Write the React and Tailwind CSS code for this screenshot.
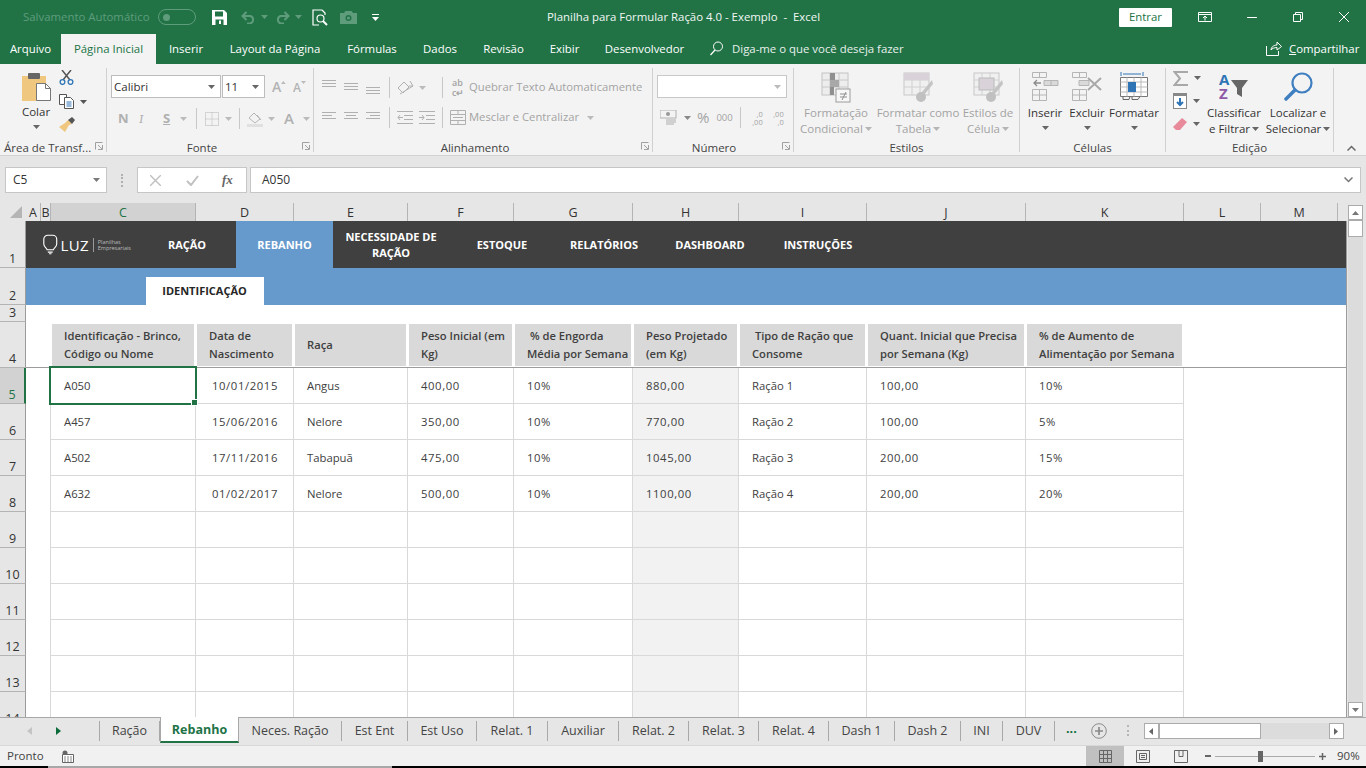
import React from "react";

const Caret = ({ c = "#7a7a7a", className = "" }) => (
  <svg width="7" height="4" viewBox="0 0 7 4" className={className}><path d="M0 0h7L3.5 4z" fill={c} /></svg>
);

const Launcher = ({ className = "" }) => (
  <svg width="8" height="8" viewBox="0 0 8 8" className={className} fill="none" stroke="#a0a0a0"><path d="M.5 7.5v-7h7M7.5 3v4.5H3M3 3l4 4" /></svg>
);

const Group = ({ className, label, noLauncher, children, labelClass = "" }) => (
  <div className={`relative flex flex-col h-[84px] shrink-0 border-r border-[#d0d0d0] ${className}`}>
    <div className="h-[73px] shrink-0">{children}</div>
    <div className={`flex-1 text-center text-[11.5px] leading-[13px] text-[#444] whitespace-nowrap ${labelClass}`}>{label}</div>
    {!noLauncher && <Launcher className="absolute right-[3px] bottom-[2px]" />}
  </div>
);

const Lines = ({ rows, y = 0 }) => (
  <svg width="15" height="14" viewBox="0 0 15 14" stroke="#b0b0b0" strokeWidth="1">
    {rows.map((r, i) => <path key={i} d={`M${r[0]} ${y + i * 3 + 1.5}H${r[1]}`} />)}
  </svg>
);

const full3 = [[0, 14], [0, 14], [0, 14]];

const SmallSep = () => <div className="w-px h-[21px] bg-[#c8c8c8] shrink-0" />;

const BigGray = ({ className, l1, l2, children }) => (
  <div className={`flex flex-col items-center shrink-0 text-[11.5px] leading-[16px] text-[#a3a3a3] whitespace-nowrap ${className}`}>
    <div className="h-[33px] mt-[4px]">{children}</div>
    <div>{l1}</div>
    <div className="flex items-center gap-[2px]">{l2}<Caret c="#b5b5b5" /></div>
  </div>
);

const BigDark = ({ className, label, children }) => (
  <div className={`flex flex-col items-center shrink-0 text-[11.5px] leading-[16px] text-[#333] whitespace-nowrap ${className}`}>
    <div className="h-[33px] mt-[4px]">{children}</div>
    <div>{label}</div>
    <Caret c="#666" className="mt-[5px]" />
  </div>
);

const TableIcon = ({ accent }) => (
  <svg width="30" height="31" viewBox="0 0 30 31" fill="none">
    <rect x="1" y="1" width="25" height="22" fill="#f0f0f0" stroke="#c8c8c8" />
    <path d="M1 8h25M1 15h25M9 1v22M17 1v22" stroke="#d0d0d0" />
    {accent}
  </svg>
);

const tabs = [
  ["Arquivo", "w-[61px]"],
  ["Página Inicial", "w-[95px]", true],
  ["Inserir", "w-[60px]"],
  ["Layout da Página", "w-[118px]"],
  ["Fórmulas", "w-[76px]"],
  ["Dados", "w-[60px]"],
  ["Revisão", "w-[67px]"],
  ["Exibir", "w-[55px]"],
  ["Desenvolvedor", "w-[105px]"],
];

function TitleBar() {
  return (
    <div className="h-[34px] bg-[#217346] flex items-center text-[11.4px] shrink-0 text-white">
      <span className="ml-[23px] w-[129px] shrink-0 text-[#5f9c7c] whitespace-nowrap">Salvamento Automático</span>
      <div className="ml-[6px] w-[38px] h-[16px] rounded-full border border-[#5f9c7c] flex items-center pl-[4px] shrink-0">
        <div className="w-[7px] h-[7px] rounded-full bg-[#5f9c7c]" />
      </div>
      <svg className="ml-[16px]" width="15" height="15" viewBox="0 0 15 15">
        <path d="M0 0h12l3 3v12H0z" fill="#fff" />
        <rect x="3" y="1.5" width="8" height="5" fill="#217346" />
        <rect x="3.5" y="9.5" width="8" height="5.5" fill="#217346" />
        <rect x="7" y="10.5" width="2" height="3.5" fill="#fff" />
      </svg>
      <svg className="ml-[14px]" width="15" height="13" viewBox="0 0 15 13" fill="none" stroke="#5f9c7c" strokeWidth="2">
        <path d="M5.5 1 1.5 5l4 4M2 5h7.5a4 4 0 0 1 0 7.5H6" />
      </svg>
      <Caret c="#5f9c7c" className="ml-[5px]" />
      <svg className="ml-[7px]" width="15" height="13" viewBox="0 0 15 13" fill="none" stroke="#5f9c7c" strokeWidth="2">
        <path d="M9.5 1l4 4-4 4M13 5H5.5a4 4 0 0 0 0 7.5H9" />
      </svg>
      <Caret c="#5f9c7c" className="ml-[5px]" />
      <svg className="ml-[10px]" width="16" height="17" viewBox="0 0 16 17" fill="none" stroke="#fff" strokeWidth="1.2">
        <path d="M10 1H1v15h6M10 1l3 3v2" />
        <circle cx="8.5" cy="9.5" r="3.5" />
        <path d="M11 12l4 4" strokeWidth="2" />
      </svg>
      <svg className="ml-[12px]" width="17" height="13" viewBox="0 0 17 13">
        <path d="M0 2h4l1.5-2h6L13 2h4v11H0z" fill="#5f9c7c" />
        <circle cx="8.5" cy="7" r="3" fill="#217346" />
        <circle cx="8.5" cy="7" r="1.6" fill="#5f9c7c" />
      </svg>
      <svg className="ml-[15px]" width="7" height="7" viewBox="0 0 7 7" fill="#fff"><path d="M0 0h7v1H0zM0 3h7L3.5 7z" /></svg>
      <span className="ml-[168px] w-[272px] shrink-0 whitespace-pre text-[#f2f7f4]">Planilha para Formular Ração 4.0 - Exemplo  -  Excel</span>
      <div className="ml-[300px] w-[53px] h-[19px] bg-white text-[#217346] flex items-center justify-center rounded-[1px] shrink-0">Entrar</div>
      <svg className="ml-[26px]" width="14" height="10" viewBox="0 0 14 10" fill="none" stroke="#fff"><path d="M.5.5h13v9H.5zM.5 2.5h13M7 8.5V4.5M5 6l2-2 2 2" /></svg>
      <div className="ml-[35px] w-[10px] h-px bg-white" />
      <svg className="ml-[36px]" width="10" height="10" viewBox="0 0 10 10" fill="none" stroke="#fff"><path d="M.5 2.5h7v7h-7zM2.5 2.5v-2h7v7h-2" /></svg>
      <svg className="ml-[36px]" width="10" height="10" viewBox="0 0 10 10" stroke="#fff"><path d="M0 0l10 10M10 0 0 10" /></svg>
    </div>
  );
}

function TabRow() {
  return (
    <div className="h-[30px] bg-[#217346] flex text-[11.4px] text-white shrink-0">
      {tabs.map(([t, w, active]) => (
        <div key={t} className={`${w} shrink-0 h-full flex items-center justify-center whitespace-nowrap ${active ? "bg-[#f3f3f3] text-[#217346]" : ""}`}>{t}</div>
      ))}
      <svg className="ml-[13px] mt-[7px] shrink-0" width="14" height="15" viewBox="0 0 14 15" fill="none" stroke="#fff">
        <circle cx="8" cy="5.5" r="4.5" />
        <path d="M5 9 .5 14" strokeWidth="1.2" />
      </svg>
      <span className="ml-[8px] w-[172px] shrink-0 leading-[30px] text-[#e8f0ec] whitespace-nowrap">Diga-me o que você deseja fazer</span>
      <svg className="ml-[362px] mt-[7px] shrink-0" width="16" height="15" viewBox="0 0 16 15" fill="none" stroke="#fff"><path d="M.5 5v9.5h12V10M5 9c0-3 3-5 6-5V1l4.5 4.5L11 9V6.5c-2.5 0-5 1-6 2.5z" /></svg>
      <span className="ml-[7px] leading-[30px] whitespace-nowrap"><u>C</u>ompartilhar</span>
    </div>
  );
}

function Ribbon() {
  return (
    <div className="h-[92px] bg-[#f3f3f3] border-b border-[#d2d2d2] pt-[4px] flex shrink-0 relative">
      <Group className="w-[107px]" label="Área de Transf..." labelClass="text-left pl-[4px]">
        <div className="flex">
          <div className="ml-[20px] w-[32px] flex flex-col items-center text-[11.5px] text-[#333]">
            <svg className="mt-[4px]" width="29" height="29" viewBox="0 0 29 29">
              <path d="M0 4h24v25H0z" fill="#efc77f" />
              <rect x="6" y="1" width="12" height="6" rx="1" fill="#666" />
              <path d="M14.5 11.5h9l5 5v12h-14z" fill="#fff" stroke="#777" />
              <path d="M23.5 11.5v5h5" fill="none" stroke="#777" />
            </svg>
            <span className="mt-[3px] leading-[16px]">Colar</span>
            <Caret c="#666" className="mt-[5px]" />
          </div>
          <div className="ml-[7px] flex flex-col">
            <svg className="mt-[2px]" width="15" height="15" viewBox="0 0 15 15" fill="none">
              <path d="M3 0l8 10M12 0 4 10" stroke="#555" strokeWidth="1.5" />
              <circle cx="3.5" cy="12" r="2.4" stroke="#2f75b5" strokeWidth="1.3" />
              <circle cx="11.5" cy="12" r="2.4" stroke="#2f75b5" strokeWidth="1.3" />
            </svg>
            <div className="mt-[9px] flex items-center gap-[5px]">
              <svg width="16" height="15" viewBox="0 0 16 15" fill="none" stroke="#555">
                <path d="M.5.5h7v10h-7z" fill="#fff" />
                <path d="M5.5 3.5h6l3 3v8h-9z" fill="#fff" />
                <path d="M7.5 8h5M7.5 10h5M7.5 12h5" stroke="#2f75b5" />
              </svg>
              <Caret c="#555" />
            </div>
            <svg className="mt-[8px]" width="16" height="15" viewBox="0 0 16 15">
              <path d="M9 3l4 4-3 1-4 7-6-5 6-4z" fill="#efc77f" />
              <path d="M9 3l4-3 3 3-3 4z" fill="#555" />
            </svg>
          </div>
        </div>
      </Group>

      <Group className="w-[207px]" label="Fonte" labelClass="pr-[16px]">
        <div className="mt-[7px] ml-[4px] flex items-center">
          <div className="w-[110px] h-[23px] bg-white border border-[#bdbdbd] flex items-center justify-between px-[2px] pr-[5px] text-[11.5px] text-[#333]">Calibri<Caret c="#666" /></div>
          <div className="ml-[1px] w-[43px] h-[23px] bg-white border border-[#bdbdbd] flex items-center justify-between px-[2px] pr-[5px] text-[11.5px] text-[#333]">11<Caret c="#666" /></div>
          <div className="ml-[7px] w-[14px] flex items-start">
            <span className="text-[14px] font-semibold text-[#b3b3b3] leading-none">A</span>
            <svg className="mt-[1px]" width="5" height="3" viewBox="0 0 5 3"><path d="M0 3h5L2.5 0z" fill="#bbb" /></svg>
          </div>
          <div className="ml-[7px] w-[15px] flex items-start">
            <span className="mt-[2px] text-[12px] font-semibold text-[#b3b3b3] leading-none">A</span>
            <svg className="mt-[1px]" width="5" height="3" viewBox="0 0 5 3"><path d="M0 0h5L2.5 3z" fill="#bbb" /></svg>
          </div>
        </div>
        <div className="mt-[10px] ml-[11px] flex items-center text-[#b0b0b0] h-[21px]">
          <span className="w-[21px] font-bold text-[13px]">N</span>
          <span className="w-[24px] italic text-[13px] font-serif">I</span>
          <span className="w-[17px] underline font-bold text-[13px]">S</span>
          <Caret c="#bbb" />
          <div className="ml-[9px]"><SmallSep /></div>
          <svg className="ml-[8px]" width="14" height="14" viewBox="0 0 14 14" fill="none" stroke="#b5b5b5" strokeDasharray="1 1"><path d="M.5.5h13v13H.5zM7 .5v13M.5 7h13" /></svg>
          <Caret c="#bbb" className="ml-[6px]" />
          <div className="ml-[7px]"><SmallSep /></div>
          <svg className="ml-[7px]" width="16" height="16" viewBox="0 0 16 16" fill="none" stroke="#b5b5b5"><path d="M2 7l5-5 6 6-5 4zM10 4l4 5" /><rect x="0" y="13" width="16" height="3" fill="#e0e0e0" stroke="none" /></svg>
          <Caret c="#bbb" className="ml-[5px]" />
          <span className="ml-[9px] w-[16px] font-semibold text-[15px] leading-none">A</span>
          <Caret c="#bbb" className="ml-[3px]" />
        </div>
      </Group>

      <Group className="w-[339px]" label="Alinhamento" labelClass="pr-[16px]">
        <div className="flex items-center h-[23px] mt-[8px]">
          <div className="ml-[8px] mt-[-3px]"><Lines rows={full3} /></div>
          <div className="ml-[7px]"><Lines rows={full3} y={1} /></div>
          <div className="ml-[7px]"><Lines rows={full3} y={5} /></div>
          <div className="ml-[8px]"><SmallSep /></div>
          <svg className="ml-[7px]" width="17" height="15" viewBox="0 0 17 15" fill="none" stroke="#b0b0b0"><path d="M1 8l6-6 5 5-6 6zM3 14l13-8M13 1l3 5h-4" /></svg>
          <Caret c="#bbb" className="ml-[5px]" />
          <div className="ml-[16px]"><SmallSep /></div>
          <span className="ml-[9px] text-[9px] leading-[10px] text-[#a3a3a3] font-semibold w-[15px]">ab<br />c↵</span>
          <span className="ml-[2px] text-[11.25px] text-[#a3a3a3] whitespace-nowrap">Quebrar Texto Automaticamente</span>
        </div>
        <div className="flex items-center h-[23px] mt-[7px]">
          <div className="ml-[8px]"><Lines rows={[[0, 14], [0, 10], [0, 14]]} /></div>
          <div className="ml-[7px]"><Lines rows={[[0, 14], [2, 12], [0, 14]]} /></div>
          <div className="ml-[7px]"><Lines rows={[[0, 14], [4, 14], [0, 14]]} /></div>
          <div className="ml-[8px]"><SmallSep /></div>
          <svg className="ml-[7px]" width="16" height="13" viewBox="0 0 16 13" fill="none" stroke="#b0b0b0"><path d="M0 .5h16M7 4.5h9M7 8.5h9M0 12.5h16M6 6.5H1M3 4 1 6.5 3 9" /></svg>
          <svg className="ml-[6px]" width="16" height="13" viewBox="0 0 16 13" fill="none" stroke="#b0b0b0"><path d="M0 .5h16M7 4.5h9M7 8.5h9M0 12.5h16M0 6.5h5M3 4l2 2.5L3 9" /></svg>
          <div className="ml-[7px]"><SmallSep /></div>
          <svg className="ml-[7px]" width="16" height="15" viewBox="0 0 16 15" fill="none" stroke="#b0b0b0"><path d="M.5.5h15v14H.5zM.5 4.5h15M.5 10.5h15M3 7.5h10M8 4.5v-4M8 10.5v4" /></svg>
          <span className="ml-[3px] text-[11.25px] text-[#a3a3a3] whitespace-nowrap">Mesclar e Centralizar</span>
          <Caret c="#bbb" className="ml-[8px]" />
        </div>
      </Group>

      <Group className="w-[141px]" label="Número" labelClass="pr-[18px]">
        <div className="mt-[7px] ml-[4px] w-[130px] h-[23px] bg-white border border-[#c8c8c8] flex items-center justify-end pr-[5px]"><Caret c="#bbb" /></div>
        <div className="mt-[9px] flex items-center h-[21px] text-[#a3a3a3]">
          <svg className="ml-[7px]" width="17" height="16" viewBox="0 0 17 16"><rect x="0" y="0" width="16" height="8" fill="none" stroke="#b0b0b0" /><circle cx="8" cy="4" r="2" fill="#999" /><path d="M6 10h10M6 12h10M6 14h8" stroke="#c5c5c5" strokeWidth="1.4" /></svg>
          <Caret c="#888" className="ml-[7px]" />
          <span className="ml-[6px] text-[15px] leading-none">%</span>
          <span className="ml-[7px] text-[9.5px] leading-none">000</span>
          <div className="ml-[7px]"><SmallSep /></div>
          <span className="ml-[7px] text-[7.5px] leading-[8px] w-[15px] text-right">,0<br />,00</span>
          <span className="ml-[6px] text-[7.5px] leading-[8px] w-[15px] text-right">,00<br />,0</span>
        </div>
      </Group>

      <Group className="w-[226px]" label="Estilos" noLauncher>
        <div className="flex">
          <BigGray className="w-[84px]" l1="Formatação" l2="Condicional">
            <svg width="30" height="31" viewBox="0 0 30 31" fill="none">
              <rect x="1" y="1" width="26" height="22" fill="#ededed" stroke="#c4c4c4" />
              <path d="M1 8h26M1 15h26M9 1v22M18 1v22" stroke="#c8c8c8" />
              <rect x="9" y="1" width="5" height="7" fill="#8f8f8f" /><rect x="9" y="8" width="9" height="7" fill="#a8a8a8" /><rect x="9" y="15" width="4" height="8" fill="#8f8f8f" />
              <rect x="15" y="17" width="14" height="13" fill="#f7f7f7" stroke="#9c9c9c" />
              <path d="M19 22h7M19 25h7M25 20l-4 8" stroke="#8f8f8f" />
            </svg>
          </BigGray>
          <BigGray className="w-[80px]" l1="Formatar como" l2="Tabela">
            <TableIcon accent={<><rect x="1" y="1" width="25" height="7" fill="#d9d3d9" /><path d="M29 8 19 20l2 3 9-11z" fill="#c4c4c4" /><circle cx="18" cy="25" r="5" fill="#c0c0c0" /></>} />
          </BigGray>
          <BigGray className="w-[60px]" l1="Estilos de" l2="Célula">
            <TableIcon accent={<><rect x="6" y="6" width="15" height="12" fill="#d9d3d9" stroke="#bbb" /><path d="M29 8 19 20l2 3 9-11z" fill="#c4c4c4" /><circle cx="18" cy="25" r="5" fill="#c0c0c0" /></>} />
          </BigGray>
        </div>
      </Group>

      <Group className="w-[146px]" label="Células" noLauncher>
        <div className="flex ml-[4px]">
          <BigDark className="w-[42px]" label="Inserir">
            <svg width="27" height="29" viewBox="0 0 27 29" fill="none" stroke="#b5b5b5">
              <path d="M.5.5h14v5H.5zM7.5.5v5M.5 17.5h14v11H.5zM.5 23h14M7.5 17.5v11" />
              <path d="M12 8.5h14v5H12z" fill="#d9d9d9" /><path d="M19 8.5v5" />
              <path d="M9 11H2M5 8l-3 3 3 3" stroke="#8a8a8a" strokeWidth="1.3" />
            </svg>
          </BigDark>
          <BigDark className="w-[42px]" label="Excluir">
            <svg width="30" height="29" viewBox="0 0 30 29" fill="none" stroke="#b5b5b5">
              <path d="M.5.5h14v5H.5zM7.5.5v5M.5 17.5h14v11H.5zM.5 23h14M7.5 17.5v11" />
              <path d="M7 8.5h10v5H7z" fill="#d9d9d9" />
              <path d="M16 6l13 12M29 6 16 18" stroke="#a8a8a8" strokeWidth="2" />
            </svg>
          </BigDark>
          <BigDark className="w-[52px]" label="Formatar">
            <svg width="28" height="30" viewBox="0 0 28 30" fill="none" stroke="#777">
              <path d="M1 0v4M23 0v4M3 2h18" stroke="#2f75b5" />
              <path d="M.5 5.5h27v19H.5z" fill="#fff" />
              <path d="M.5 10h27M.5 15h27M.5 20h27M7 5.5v19M14 5.5v19M21 5.5v19" stroke="#bbb" />
              <rect x="8" y="10" width="8" height="10" fill="#2f75b5" stroke="none" />
              <path d="M3 24.5v3h6l1-3M12 24.5v3h6l2-3" stroke="#666" />
            </svg>
          </BigDark>
        </div>
      </Group>

      <Group className="w-[168px]" label="Edição" noLauncher>
        <div className="flex">
          <div className="ml-[7px] w-[28px] flex flex-col">
            <div className="mt-[2px] h-[16px] flex items-center gap-[6px]">
              <svg width="15" height="15" viewBox="0 0 15 15" fill="none" stroke="#a8a8a8" strokeWidth="2"><path d="M14 2V1H1.5L7 7.5 1.5 14H14v-1" /></svg>
              <Caret c="#666" />
            </div>
            <div className="mt-[7px] h-[16px] flex items-center gap-[6px]">
              <svg width="14" height="16" viewBox="0 0 14 16"><rect x=".5" y=".5" width="13" height="15" fill="#fff" stroke="#888" /><rect x="0" y="0" width="14" height="3" fill="#888" /><path d="M7 5v7M4 9l3 3 3-3" stroke="#2f75b5" strokeWidth="2" fill="none" /></svg>
              <Caret c="#666" />
            </div>
            <div className="mt-[8px] h-[14px] flex items-center gap-[6px]">
              <svg width="14" height="13" viewBox="0 0 14 13"><path d="M9 0l5 4-7 8H3L0 9z" fill="#e88a9a" /></svg>
              <Caret c="#666" />
            </div>
          </div>
          <div className="ml-[3px] w-[60px] flex flex-col items-center text-[11.5px] leading-[16px] text-[#333] whitespace-nowrap">
            <div className="mt-[4px] h-[29px] w-[30px] flex">
              <div className="w-[12px] flex flex-col text-[15px] leading-[14px] font-bold">
                <span className="text-[#2f75b5]">A</span>
                <span className="text-[#8e5aa8]">Z</span>
              </div>
              <svg className="mt-[8px]" width="17" height="18" viewBox="0 0 17 18"><path d="M0 0h17l-6 8v9l-5-3V8z" fill="#666" /></svg>
            </div>
            <div className="mt-[4px]">Classificar</div>
            <div className="flex items-center gap-[2px]">e Filtrar<Caret c="#666" /></div>
          </div>
          <div className="ml-[3px] w-[62px] flex flex-col items-center text-[11.5px] leading-[16px] text-[#333] whitespace-nowrap">
            <svg className="mt-[4px]" width="29" height="29" viewBox="0 0 29 29" fill="none" stroke="#3f7fc0">
              <circle cx="18" cy="11" r="9.5" strokeWidth="2.2" />
              <path d="M11 18 2 27" strokeWidth="3.5" strokeLinecap="round" />
            </svg>
            <div className="mt-[4px]">Localizar e</div>
            <div className="flex items-center gap-[2px]">Selecionar<Caret c="#666" /></div>
          </div>
        </div>
      </Group>
      <svg className="absolute right-[10px] bottom-[4px]" width="9" height="6" viewBox="0 0 9 6" fill="none" stroke="#666" strokeWidth="1.5"><path d="M.5 5.5l4-4 4 4" /></svg>
    </div>
  );
}

function FormulaBar() {
  return (
    <div className="h-[47px] flex items-center shrink-0 text-[12px] text-[#333] pt-[1px]">
      <div className="ml-[5px] w-[102px] h-[26px] bg-white border border-[#c6c6c6] flex items-center justify-between pl-[7px] pr-[6px]">C5<Caret c="#7a7a7a" /></div>
      <div className="ml-[14px] w-[2px] h-[13px] border-l-2 border-dotted border-[#b0b0b0]" />
      <div className="ml-[14px] w-[110px] h-[26px] bg-white border border-[#c6c6c6] flex items-center">
        <svg className="ml-[12px]" width="11" height="11" viewBox="0 0 11 11" stroke="#c0c0c0" strokeWidth="1.4"><path d="M0 0l11 11M11 0 0 11" /></svg>
        <svg className="ml-[25px]" width="13" height="11" viewBox="0 0 13 11" fill="none" stroke="#c0c0c0" strokeWidth="2"><path d="M1 6l4 4 7-9" /></svg>
        <span className="ml-[23px] font-['Liberation_Serif',serif] italic font-bold text-[#666] text-[13px]">fx</span>
      </div>
      <div className="ml-[3px] w-[1111px] h-[26px] bg-white border border-[#c6c6c6] flex items-center justify-between pl-[11px] pr-[7px]">A050
        <svg width="9" height="6" viewBox="0 0 9 6" fill="none" stroke="#777" strokeWidth="1.5"><path d="M.5.5l4 4 4-4" /></svg>
      </div>
    </div>
  );
}

const gridCols = "grid grid-cols-[15px_10px_145px_98px_114px_106px_119px_106px_128px_159px_158px_77px_77px_8px]";

function ColHeaders() {
  const cols = ["A", "B", "C", "D", "E", "F", "G", "H", "I", "J", "K", "L", "M", ""];
  return (
    <div className="h-[18px] flex shrink-0">
      <div className="w-[26px] flex justify-end items-end pr-[4px] pb-[3px] shrink-0">
        <svg width="12" height="12" viewBox="0 0 12 12"><path d="M12 0v12H0z" fill="#b5b5b5" /></svg>
      </div>
      <div className={gridCols}>
        {cols.map((c, i) => (
          <div key={i} className={`text-[12.5px] leading-[19px] text-center ${i < 13 ? "border-r border-[#b4b4b4]" : ""} ${c === "C" ? "bg-[#d2d2d2] text-[#217346]" : "text-[#333]"}`}>{c}</div>
        ))}
      </div>
    </div>
  );
}

const RowHead = ({ n, h, active }) => (
  <div className={`${h} w-[26px] shrink-0 flex items-end justify-center text-[12.5px] leading-[16px] border-b border-[#b4b4b4] ${active ? "bg-[#d2d2d2] text-[#217346] border-r-2 border-r-[#217346]" : "bg-[#e6e6e6] text-[#333] border-r border-r-[#9c9c9c]"}`}>{n}</div>
);

const navItems = [
  ["RAÇÃO", "w-[98px] ml-[7px]"],
  ["REBANHO", "w-[97px] bg-[#6699cc] self-stretch"],
  ["NECESSIDADE DE RAÇÃO", "w-[116px]"],
  ["ESTOQUE", "w-[106px]"],
  ["RELATÓRIOS", "w-[98px]"],
  ["DASHBOARD", "w-[114px]"],
  ["INSTRUÇÕES", "w-[102px]"],
];

const headers = [
  ["Identificação - Brinco, Código ou Nome", "w-[130px]"],
  ["Data de Nascimento", "w-[72px]"],
  ["Raça", ""],
  ["Peso Inicial (em Kg)", "w-[92px]"],
  [" % de Engorda Média por Semana", "w-[104px]"],
  ["Peso Projetado (em Kg)", "w-[92px]"],
  [" Tipo de Ração que Consome", "w-[112px]"],
  ["Quant. Inicial que Precisa por Semana (Kg)", "w-[145px]"],
  ["% de Aumento de Alimentação por Semana", "w-[145px]"],
];

const data = [
  ["A050", "10/01/2015", "Angus", "400,00", "10%", "880,00", "Ração 1", "100,00", "10%"],
  ["A457", "15/06/2016", "Nelore", "350,00", "10%", "770,00", "Ração 2", "100,00", "5%"],
  ["A502", "17/11/2016", "Tabapuã", "475,00", "10%", "1045,00", "Ração 3", "200,00", "15%"],
  ["A632", "01/02/2017", "Nelore", "500,00", "10%", "1100,00", "Ração 4", "200,00", "20%"],
  ...Array.from({ length: 6 }, () => Array(9).fill("")),
];

function Sheet() {
  return (
    <div className="relative shrink-0 h-full overflow-hidden w-[1346px] bg-white font-['Open_Sans',sans-serif]">
      <div className="flex">
        <RowHead n="1" h="h-[47px]" />
        <div className="flex-1 bg-[#404040] flex items-center text-white text-[11px] font-bold leading-[16px] text-center">
          <div className="ml-[17px] flex items-center w-[88px] shrink-0">
            <svg width="18" height="25" viewBox="0 0 18 25" fill="none" stroke="#fff" strokeWidth="1.4">
              <path d="M5 19c0-2-4-3-4-7V6a5 5 0 0 1 5-5h6a5 5 0 0 1 5 5v6c0 4-4 5-4 7z" />
              <path d="M6 22h6M7.5 24h3" />
            </svg>
            <span className="ml-[3px] text-[15px] font-normal tracking-[0.3px]">LUZ</span>
            <div className="ml-[4px] w-px h-[14px] bg-[#999] shrink-0" />
            <span className="ml-[4px] text-[5.5px] leading-[6px] font-normal text-[#bbb] text-left whitespace-nowrap">Planilhas<br />Empresariais</span>
          </div>
          {navItems.map(([t, c]) => (
            <div key={t} className={`${c} flex items-center justify-center shrink-0 pt-[1px]`}><span>{t}</span></div>
          ))}
        </div>
      </div>
      <div className="flex">
        <RowHead n="2" h="h-[37px]" />
        <div className="flex-1 bg-[#6699cc] flex items-end">
          <div className="ml-[120px] w-[118px] h-[28px] pt-[1px] pr-[1px] bg-white flex items-center justify-center text-[11px] font-bold text-[#262626]">IDENTIFICAÇÃO</div>
        </div>
      </div>
      <div className="flex">
        <RowHead n="3" h="h-[17px]" />
        <div className="flex-1" />
      </div>
      <div className="flex">
        <RowHead n="4" h="h-[46px]" />
        <div className={`${gridCols} flex-1 border-b border-[#9c9c9c]`}>
          <div /><div />
          {headers.map(([t, w], i) => (
            <div key={i} className="pl-[1px] pr-[2px] pt-[2px] pb-[1px] min-w-0">
              <div className="h-full bg-[#d9d9d9] flex items-center pl-[12px] text-[11.2px] leading-[18px] font-semibold text-[#404040] whitespace-pre-wrap">
                <div className={w}>{t}</div>
              </div>
            </div>
          ))}
          <div /><div /><div />
        </div>
      </div>
      {data.map((r, i) => (
        <div className="flex" key={i}>
          <RowHead n={String(i + 5)} h="h-[36px]" active={i === 0} />
          <div className={`${gridCols} flex-1`}>
            <div /><div className="border-r border-[#d9d9d9]" />
            {r.map((c, j) => (
              <div key={j} className={`border-r border-b border-[#d9d9d9] flex items-center pt-[1px] text-[11.3px] text-[#404040] ${j === 1 ? "pl-[16px]" : "pl-[13px]"} ${j === 5 ? "bg-[#f2f2f2]" : ""} ${j === 1 || j === 3 || j === 4 || j === 5 || j === 7 || j === 8 ? "tracking-[0.6px]" : ""}`}>{c}</div>
            ))}
            <div /><div /><div />
          </div>
        </div>
      ))}
      <div className="absolute left-[49px] top-[145px] w-[148px] h-[39px] border-2 border-[#217346]">
        <div className="absolute right-[-3px] bottom-[-3px] w-[5px] h-[5px] bg-[#217346] border border-white box-content" />
      </div>
    </div>
  );
}

function VScroll() {
  return (
    <div className="flex-1 flex flex-col items-end pr-[3px] border-l border-[#9c9c9c]">
      <div className="w-[15px] flex-1 bg-[#dcdcdc] flex flex-col mt-[-16px] z-10">
        <div className="h-[15px] bg-white border border-[#ababab] flex items-center justify-center"><svg width="7" height="4" viewBox="0 0 7 4"><path d="M0 4h7L3.5 0z" fill="#777" /></svg></div>
        <div className="h-[17px] bg-white border border-[#ababab]" />
        <div className="flex-1" />
        <div className="h-[15px] bg-white border border-[#ababab] flex items-center justify-center"><Caret c="#777" /></div>
      </div>
    </div>
  );
}

const sheetTabs = [
  ["Ração", "w-[60px]"], ["Rebanho", "w-[79px]", true], ["Neces. Ração", "w-[103px]"], ["Est Ent", "w-[66px]"], ["Est Uso", "w-[69px]"],
  ["Relat. 1", "w-[71px]"], ["Auxiliar", "w-[71px]"], ["Relat. 2", "w-[70px]"], ["Relat. 3", "w-[70px]"], ["Relat. 4", "w-[70px]"],
  ["Dash 1", "w-[66px]"], ["Dash 2", "w-[66px]"], ["INI", "w-[42px]"], ["DUV", "w-[52px]"],
];

function TabsBar() {
  return (
    <div className="h-[28px] flex border-t border-[#a8a8a8] bg-[#e6e6e6] text-[12.5px] text-[#444] shrink-0 relative">
      <div className="w-[100px] shrink-0 flex items-center border-r border-[#a8a8a8] my-[3px] h-[20px]">
        <svg className="ml-[27px]" width="5" height="8" viewBox="0 0 5 8"><path d="M5 0v8L0 4z" fill="#c4c4c4" /></svg>
        <svg className="ml-[24px]" width="5" height="8" viewBox="0 0 5 8"><path d="M0 0v8l5-4z" fill="#0c6b3a" /></svg>
      </div>
      {sheetTabs.map(([t, w, a]) => (
        a ? (
          <div key={t} className={`${w} shrink-0 mt-[-1px] h-[26px] pt-[3px] bg-white border-b-2 border-x border-x-[#a8a8a8] border-b-[#217346] font-bold text-[#217346] flex items-center justify-center whitespace-nowrap`}>{t}</div>
        ) : (
          <div key={t} className={`${w} shrink-0 h-[20px] my-[3px] border-r border-[#a8a8a8] flex items-center justify-center whitespace-nowrap`}>{t}</div>
        )
      ))}
      <span className="ml-[11px] mt-[1px] font-bold text-[#0c6b3a] leading-[20px]">...</span>
      <svg className="ml-[14px] mt-[5px]" width="16" height="16" viewBox="0 0 16 16" fill="none" stroke="#8a8a8a"><circle cx="8" cy="8" r="7.3" /><path d="M8 4v8M4 8h8" strokeWidth="1.7" /></svg>
      <div className="ml-[20px] mt-[7px] w-[2px] h-[11px] border-l-2 border-dotted border-[#b5b5b5]" />
      <div className="ml-[15px] mt-[5px] w-[200px] h-[16px] bg-[#dcdcdc] flex">
        <div className="w-[15px] bg-white border border-[#ababab] flex items-center justify-center"><svg width="4" height="7" viewBox="0 0 4 7"><path d="M4 0v7L0 3.5z" fill="#666" /></svg></div>
        <div className="w-[102px] bg-white border border-[#ababab]" />
        <div className="flex-1" />
        <div className="w-[15px] bg-white border border-[#ababab] flex items-center justify-center"><svg width="4" height="7" viewBox="0 0 4 7"><path d="M0 0v7l4-3.5z" fill="#666" /></svg></div>
      </div>
    </div>
  );
}

function StatusBar() {
  return (
    <div className="h-[21px] bg-[#f1f1f1] border-t border-[#d8d8d8] flex items-center text-[11.5px] text-[#444] shrink-0">
      <span className="ml-[7px] w-[55px] shrink-0">Pronto</span>
      <svg width="12" height="13" viewBox="0 0 12 13"><circle cx="3" cy="3" r="2.5" fill="#666" /><path d="M.5 4.5h11v8H.5z" fill="#fff" stroke="#666" /><path d="M2 7h8M2 9h8M2 11h8" stroke="#888" strokeDasharray="2 1" /></svg>
      <div className="ml-[1012px] w-[38px] h-full bg-[#c0c0c0] flex items-center justify-center shrink-0">
        <svg width="13" height="13" viewBox="0 0 13 13" fill="none" stroke="#666"><path d="M.5.5h12v12H.5zM4.5.5v12M8.5.5v12M.5 4.5h12M.5 8.5h12" /></svg>
      </div>
      <svg className="ml-[12px]" width="14" height="13" viewBox="0 0 14 13" fill="none" stroke="#666"><path d="M.5.5h13v12H.5zM3.5 3.5h7v6h-7zM5 5.5h4M5 7.5h4" /></svg>
      <svg className="ml-[24px]" width="14" height="13" viewBox="0 0 14 13" fill="none" stroke="#666"><path d="M.5.5h13v12H.5zM5 .5v6h4v-6" /></svg>
      <div className="ml-[17px] w-[6px] h-[2px] bg-[#666] shrink-0" />
      <div className="ml-[4px] w-[100px] h-px bg-[#aaa] relative shrink-0">
        <div className="absolute left-[43px] top-[-5px] w-[5px] h-[11px] bg-[#666]" />
      </div>
      <svg className="ml-[4px]" width="7" height="7" viewBox="0 0 7 7"><path d="M0 3.5h7M3.5 0v7" stroke="#666" strokeWidth="1.5" /></svg>
      <span className="ml-[11px]">90%</span>
    </div>
  );
}

export default function App() {
  return (
    <div className="w-[1366px] h-[768px] overflow-hidden flex flex-col bg-[#e6e6e6] font-['Open_Sans',sans-serif]">
      <TitleBar />
      <TabRow />
      <Ribbon />
      <FormulaBar />
      <ColHeaders />
      <div className="flex flex-1 min-h-0">
        <Sheet />
        <VScroll />
      </div>
      <TabsBar />
      <StatusBar />
      <div className="h-[2px] flex shrink-0">
        <div className="w-[48px] bg-black" />
        <div className="w-[344px] bg-[#a8a8a8]" />
        <div className="flex-1 bg-black" />
      </div>
    </div>
  );
}
